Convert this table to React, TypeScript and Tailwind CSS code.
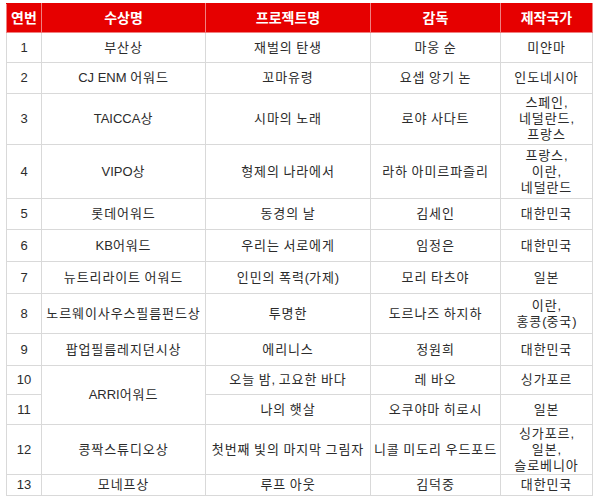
const rows: { no: string; award?: string; span?: number; project: string; director: string; country: string[]; h: string }[] = [
  { no: '1', award: '부산상', project: '재벌의 탄생', director: '마웅 순', country: ['미얀마'], h: 'h-[30px]' },
  { no: '2', award: 'CJ ENM 어워드', project: '꼬마유령', director: '요셉 앙기 논', country: ['인도네시아'], h: 'h-[31px]' },
  { no: '3', award: 'TAICCA상', project: '시마의 노래', director: '로야 사다트', country: ['스페인,', '네덜란드,', '프랑스'], h: 'h-[51px]' },
  { no: '4', award: 'VIPO상', project: '형제의 나라에서', director: '라하 아미르파즐리', country: ['프랑스,', '이란,', '네덜란드'], h: 'h-[54px]' },
  { no: '5', award: '롯데어워드', project: '동경의 날', director: '김세인', country: ['대한민국'], h: 'h-[31px]' },
  { no: '6', award: 'KB어워드', project: '우리는 서로에게', director: '임정은', country: ['대한민국'], h: 'h-[32px]' },
  { no: '7', award: '뉴트리라이트 어워드', project: '인민의 폭력(가제)', director: '모리 타츠야', country: ['일본'], h: 'h-[32px]' },
  { no: '8', award: '노르웨이사우스필름펀드상', project: '투명한', director: '도르나즈 하지하', country: ['이란,', '홍콩(중국)'], h: 'h-[40px]' },
  { no: '9', award: '팝업필름레지던시상', project: '에리니스', director: '정원희', country: ['대한민국'], h: 'h-[32px]' },
  { no: '10', award: 'ARRI어워드', span: 2, project: '오늘 밤, 고요한 바다', director: '레 바오', country: ['싱가포르'], h: 'h-[29px]' },
  { no: '11', project: '나의 햇살', director: '오쿠야마 히로시', country: ['일본'], h: 'h-[30px]' },
  { no: '12', award: '콩짝스튜디오상', project: '첫번째 빛의 마지막 그림자', director: '니콜 미도리 우드포드', country: ['싱가포르,', '일본,', '슬로베니아'], h: 'h-[50px]' },
  { no: '13', award: '모네프상', project: '루프 아웃', director: '김덕중', country: ['대한민국'], h: 'h-[21px]' },
]

const td = 'border border-[#d9d9d9] p-0 text-center align-middle'

// hangul runs get a little extra spacing so they sit as wide as the original
function T({ s }: { s: string }) {
  const parts = s.split(/([\uac00-\ud7a3]+)/).filter(Boolean)
  return (
    <>
      {parts.map((p, i) =>
        /[\uac00-\ud7a3]/.test(p) ? (
          <span key={i} className="tracking-[0.9px]">
            {p}
          </span>
        ) : (
          <span key={i}>{p}</span>
        ),
      )}
    </>
  )
}

export default function App() {
  return (
    <div className="w-[600px] h-[499px] bg-white pl-[6px] pt-[3px] font-['Liberation_Sans','Noto_Sans_CJK_KR',sans-serif] text-[13px] leading-[16px] text-[#2b2b2b]">
      <table className="w-[586px] table-fixed border-collapse">
        <colgroup>
          <col className="w-[35px]" />
          <col className="w-[164px]" />
          <col className="w-[165px]" />
          <col className="w-[130px]" />
          <col className="w-[92px]" />
        </colgroup>
        <thead>
          <tr className="h-[29px] bg-[#e60000] text-white text-[14px] font-bold">
            {['연번', '수상명', '프로젝트명', '감독', '제작국가'].map((t) => (
              <th key={t} className="border border-[#f08080] border-t-[#e60000] p-0 text-center align-middle font-bold">
                {t}
              </th>
            ))}
          </tr>
        </thead>
        <tbody>
          {rows.map((r) => (
            <tr key={r.no} className={r.h}>
              <td className={td}>{r.no}</td>
              {r.award !== undefined && (
                <td className={td} rowSpan={r.span}>
                  <T s={r.award} />
                </td>
              )}
              <td className={td}>
                <T s={r.project} />
              </td>
              <td className={td}>
                <T s={r.director} />
              </td>
              <td className={td}>
                {r.country.map((c) => (
                  <div key={c}>
                    <T s={c} />
                  </div>
                ))}
              </td>
            </tr>
          ))}
        </tbody>
      </table>
    </div>
  )
}
